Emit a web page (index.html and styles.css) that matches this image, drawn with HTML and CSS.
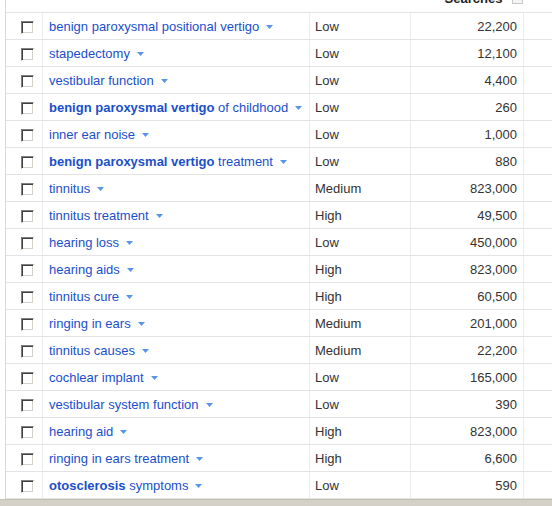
FILE: index.html
```html
<!DOCTYPE html>
<html>
<head>
<meta charset="utf-8">
<link rel="stylesheet" href="styles.css">
</head>
<body>
<div class="page">
  <div class="grid">
    <div class="head">
      <div class="h-check"></div>
      <div class="h-kw"></div>
      <div class="h-comp"></div>
      <div class="h-num">Searches <span class="info"></span></div>
      <div class="h-extra"></div>
    </div>
    <div class="row"><div class="c-check"><span class="cb"></span></div><div class="c-kw"><span class="kw">benign paroxysmal positional vertigo</span><svg class="arr" width="7" height="4" viewBox="0 0 7 4"><polygon points="0,0 7,0 3.5,4"/></svg></div><div class="c-comp">Low</div><div class="c-num">22,200</div><div class="c-extra"></div></div>
    <div class="row"><div class="c-check"><span class="cb"></span></div><div class="c-kw"><span class="kw">stapedectomy</span><svg class="arr" width="7" height="4" viewBox="0 0 7 4"><polygon points="0,0 7,0 3.5,4"/></svg></div><div class="c-comp">Low</div><div class="c-num">12,100</div><div class="c-extra"></div></div>
    <div class="row"><div class="c-check"><span class="cb"></span></div><div class="c-kw"><span class="kw">vestibular function</span><svg class="arr" width="7" height="4" viewBox="0 0 7 4"><polygon points="0,0 7,0 3.5,4"/></svg></div><div class="c-comp">Low</div><div class="c-num">4,400</div><div class="c-extra"></div></div>
    <div class="row"><div class="c-check"><span class="cb"></span></div><div class="c-kw"><span class="kw"><b>benign paroxysmal vertigo</b> of childhood</span><svg class="arr" width="7" height="4" viewBox="0 0 7 4"><polygon points="0,0 7,0 3.5,4"/></svg></div><div class="c-comp">Low</div><div class="c-num">260</div><div class="c-extra"></div></div>
    <div class="row"><div class="c-check"><span class="cb"></span></div><div class="c-kw"><span class="kw">inner ear noise</span><svg class="arr" width="7" height="4" viewBox="0 0 7 4"><polygon points="0,0 7,0 3.5,4"/></svg></div><div class="c-comp">Low</div><div class="c-num">1,000</div><div class="c-extra"></div></div>
    <div class="row"><div class="c-check"><span class="cb"></span></div><div class="c-kw"><span class="kw"><b>benign paroxysmal vertigo</b> treatment</span><svg class="arr" width="7" height="4" viewBox="0 0 7 4"><polygon points="0,0 7,0 3.5,4"/></svg></div><div class="c-comp">Low</div><div class="c-num">880</div><div class="c-extra"></div></div>
    <div class="row"><div class="c-check"><span class="cb"></span></div><div class="c-kw"><span class="kw">tinnitus</span><svg class="arr" width="7" height="4" viewBox="0 0 7 4"><polygon points="0,0 7,0 3.5,4"/></svg></div><div class="c-comp">Medium</div><div class="c-num">823,000</div><div class="c-extra"></div></div>
    <div class="row"><div class="c-check"><span class="cb"></span></div><div class="c-kw"><span class="kw">tinnitus treatment</span><svg class="arr" width="7" height="4" viewBox="0 0 7 4"><polygon points="0,0 7,0 3.5,4"/></svg></div><div class="c-comp">High</div><div class="c-num">49,500</div><div class="c-extra"></div></div>
    <div class="row"><div class="c-check"><span class="cb"></span></div><div class="c-kw"><span class="kw">hearing loss</span><svg class="arr" width="7" height="4" viewBox="0 0 7 4"><polygon points="0,0 7,0 3.5,4"/></svg></div><div class="c-comp">Low</div><div class="c-num">450,000</div><div class="c-extra"></div></div>
    <div class="row"><div class="c-check"><span class="cb"></span></div><div class="c-kw"><span class="kw">hearing aids</span><svg class="arr" width="7" height="4" viewBox="0 0 7 4"><polygon points="0,0 7,0 3.5,4"/></svg></div><div class="c-comp">High</div><div class="c-num">823,000</div><div class="c-extra"></div></div>
    <div class="row"><div class="c-check"><span class="cb"></span></div><div class="c-kw"><span class="kw">tinnitus cure</span><svg class="arr" width="7" height="4" viewBox="0 0 7 4"><polygon points="0,0 7,0 3.5,4"/></svg></div><div class="c-comp">High</div><div class="c-num">60,500</div><div class="c-extra"></div></div>
    <div class="row"><div class="c-check"><span class="cb"></span></div><div class="c-kw"><span class="kw">ringing in ears</span><svg class="arr" width="7" height="4" viewBox="0 0 7 4"><polygon points="0,0 7,0 3.5,4"/></svg></div><div class="c-comp">Medium</div><div class="c-num">201,000</div><div class="c-extra"></div></div>
    <div class="row"><div class="c-check"><span class="cb"></span></div><div class="c-kw"><span class="kw">tinnitus causes</span><svg class="arr" width="7" height="4" viewBox="0 0 7 4"><polygon points="0,0 7,0 3.5,4"/></svg></div><div class="c-comp">Medium</div><div class="c-num">22,200</div><div class="c-extra"></div></div>
    <div class="row"><div class="c-check"><span class="cb"></span></div><div class="c-kw"><span class="kw">cochlear implant</span><svg class="arr" width="7" height="4" viewBox="0 0 7 4"><polygon points="0,0 7,0 3.5,4"/></svg></div><div class="c-comp">Low</div><div class="c-num">165,000</div><div class="c-extra"></div></div>
    <div class="row"><div class="c-check"><span class="cb"></span></div><div class="c-kw"><span class="kw">vestibular system function</span><svg class="arr" width="7" height="4" viewBox="0 0 7 4"><polygon points="0,0 7,0 3.5,4"/></svg></div><div class="c-comp">Low</div><div class="c-num">390</div><div class="c-extra"></div></div>
    <div class="row"><div class="c-check"><span class="cb"></span></div><div class="c-kw"><span class="kw">hearing aid</span><svg class="arr" width="7" height="4" viewBox="0 0 7 4"><polygon points="0,0 7,0 3.5,4"/></svg></div><div class="c-comp">High</div><div class="c-num">823,000</div><div class="c-extra"></div></div>
    <div class="row"><div class="c-check"><span class="cb"></span></div><div class="c-kw"><span class="kw">ringing in ears treatment</span><svg class="arr" width="7" height="4" viewBox="0 0 7 4"><polygon points="0,0 7,0 3.5,4"/></svg></div><div class="c-comp">High</div><div class="c-num">6,600</div><div class="c-extra"></div></div>
    <div class="row"><div class="c-check"><span class="cb"></span></div><div class="c-kw"><span class="kw"><b>otosclerosis</b> symptoms</span><svg class="arr" width="7" height="4" viewBox="0 0 7 4"><polygon points="0,0 7,0 3.5,4"/></svg></div><div class="c-comp">Low</div><div class="c-num">590</div><div class="c-extra"></div></div>
  </div>
  <div class="statusbar"></div>
</div>
</body>
</html>
```
FILE: styles.css
```css
html, body {
  margin: 0;
  padding: 0;
  background: #fff;
  overflow: hidden;
}
body {
  font-family: "Liberation Sans", Arial, sans-serif;
  font-size: 13px;
  color: #333;
}
.page {
  width: 552px;
  height: 506px;
  overflow: hidden;
}
.grid {
  margin-top: -10px;
  margin-left: 5px;
  border-left: 1px solid #d8d8d8;
}
.head, .row {
  display: flex;
  border-bottom: 1px solid #e3e3e3;
}
.head {
  height: 22px;
}
.row {
  height: 26px;
  line-height: 26px;
}
.h-check, .c-check { width: 37px; flex: none; }
.h-kw, .c-kw { width: 267px; flex: none; }
.h-comp, .c-comp { width: 101px; flex: none; }
.h-num, .c-num { width: 113px; flex: none; }
.h-extra, .c-extra { flex: 1; }
.c-check, .c-kw, .c-comp, .c-num {
  border-right: 1px solid #ececec;
}
.h-check, .h-kw, .h-comp, .h-extra { border-right: 1px solid transparent; }
.h-num {
  border-right: 1px solid transparent;
  text-align: right;
  font-weight: bold;
  color: #222;
  line-height: 16px;
  padding-top: 1px;
  padding-right: 3px;
  box-sizing: border-box;
}
.info {
  display: inline-block;
  width: 9px;
  height: 9px;
  border: 1px solid #c8c8c8;
  background: #f4f4f4;
  vertical-align: -1px;
  margin-left: 6px;
}
.c-check {
  box-sizing: border-box;
  padding-left: 15px;
  padding-top: 8px;
  line-height: 0;
}
.cb {
  display: block;
  width: 11px;
  height: 11px;
  border: 1px solid;
  border-color: #808080 #ffffff #ffffff #808080;
  box-shadow: inset 1px 1px 0 #404040, inset -1px -1px 0 #d4d0c8;
  background: #fff;
}
.c-kw {
  box-sizing: border-box;
  padding-left: 6px;
  padding-top: 1px;
  color: #1a4fcc;
  white-space: nowrap;
  display: flex;
  align-items: center;
}
.kw {
  line-height: 26px;
}
.kw b {
  font-weight: bold;
}
.arr {
  margin-left: 7px;
  fill: #5895e8;
  flex: none;
}
.c-comp {
  box-sizing: border-box;
  padding-left: 5px;
  padding-top: 1px;
  color: #333;
}
.c-num {
  box-sizing: border-box;
  padding-right: 6px;
  padding-top: 1px;
  text-align: right;
  color: #333;
}
.statusbar {
  height: 8px;
  background: #d4d0c8;
  border-top: 1px solid #c4c0b8;
}
```
